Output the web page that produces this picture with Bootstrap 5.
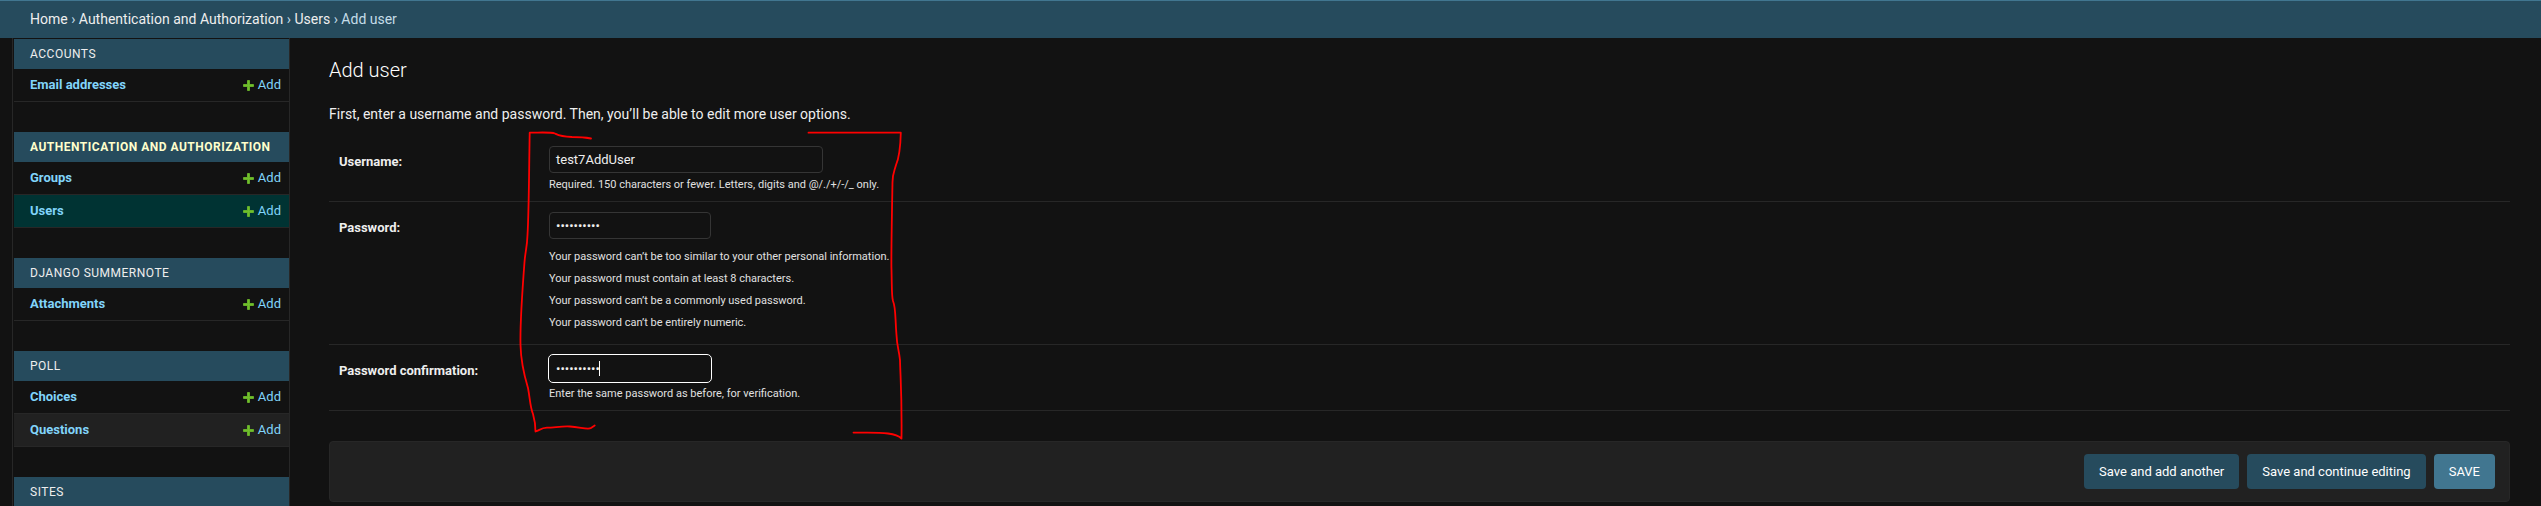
<!DOCTYPE html>
<html lang="en" data-bs-theme="dark">
<head>
<meta charset="utf-8">
<meta name="viewport" content="width=device-width, initial-scale=1">
<title>Add user | Django site admin</title>
<link href="https://cdn.jsdelivr.net/npm/bootstrap@5.3.0/dist/css/bootstrap.min.css" rel="stylesheet">
<style>
html{height:506px;overflow:hidden}
body{background:#121212;color:#eee;font:14px/20px Roboto,"Liberation Sans",sans-serif;height:506px;overflow:hidden}
a{text-decoration:none}
.crumbs{height:38px;background:#264b5d;border-top:1px solid #417690;padding:0 30px 1px;color:#c4dce8;white-space:pre;font-size:14px}
.crumbs a{color:#eee}
.side{width:278px;margin-left:12px;border:solid #272727;border-width:0 1px;padding:1px 0 0 1px;height:468px;overflow:hidden;flex:none}
.app{margin-bottom:30px}
.cap{height:30px;background:#264b5d;color:#eee;padding-left:16px;font-size:12px;letter-spacing:.5px;text-transform:uppercase}
.cap.now{color:#ffc;font-weight:700}
.model{height:33px;border-bottom:1px solid #272727;padding:0 8px 0 16px;font-size:13px}
.model a{color:#81d4fa}
.model.now{background:#033}
.model.hov{background:#212121}
.pane{position:relative;padding:0 31px 0 39px;min-width:0;height:468px}
h1{font-size:20px;font-weight:300;line-height:24px;margin:20px 0 20px}
.intro{margin:0;height:34px;line-height:24px}
.frow{border-bottom:1px solid #272727;padding:10px;height:66px}
.frow.tall{height:143px}
.frow label{width:210px;font-size:13px;font-weight:700;line-height:20px;padding-top:6px;flex:none}
.box{display:block;height:27px;width:162px;border:1px solid #353535;border-radius:4px;background:#121212;color:#eee;padding:5px 6px;font-size:13px;line-height:15px}
.box.wide{width:274px}
.box.on{border-color:#121212;outline:1px solid #fff}
.caret{position:absolute;left:50px;top:6px;width:1px;height:15px;background:#fff}
.hint{font-size:11px;line-height:14px;color:#e0e0e0;margin-top:5px;white-space:nowrap}
.hint p{margin:0 0 8px}
.hint.rules{margin-top:11px}
.acts{margin-top:30px;height:61px;border:1px solid #272727;border-radius:4px;background:#212121;padding:0 14px;gap:8px}
.acts .btn{height:35px;padding:0 15px;font-size:13px;line-height:35px;border:0;border-radius:4px;color:#fff;background:#264b5d}
.acts .btn.main{background:#417690}
.pen{position:absolute;left:210px;top:82px}
</style>
</head>
<body>
<nav class="crumbs d-flex align-items-center"><a href="#">Home</a> › <a href="#">Authentication and Authorization</a> › <a href="#">Users</a> › Add user</nav>
<div class="d-flex">
<aside class="side" id="side"></aside>
<main class="pane flex-grow-1">
<h1>Add user</h1>
<p class="intro">First, enter a username and password. Then, you’ll be able to edit more user options.</p>
<div class="frow d-flex"><label>Username:</label><div><div class="box wide">test7AddUser</div><div class="hint">Required. 150 characters or fewer. Letters, digits and @/./+/-/_ only.</div></div></div>
<div class="frow tall d-flex"><label>Password:</label><div><div class="box">••••••••••</div><div class="hint rules"><p>Your password can’t be too similar to your other personal information.</p><p>Your password must contain at least 8 characters.</p><p>Your password can’t be a commonly used password.</p><p>Your password can’t be entirely numeric.</p></div></div></div>
<div class="frow d-flex"><label>Password confirmation:</label><div><div class="position-relative"><div class="box on">••••••••••</div><span class="caret"></span></div><div class="hint">Enter the same password as before, for verification.</div></div></div>
<div class="acts d-flex justify-content-end align-items-center"><button class="btn">Save and add another</button><button class="btn">Save and continue editing</button><button class="btn main">SAVE</button></div>
<svg class="pen" width="420" height="330" viewBox="500 120 420 330" fill="none" stroke="#f00" stroke-width="1.8" stroke-linecap="round" stroke-linejoin="round">
<path d="M591 138.5Q583 137 572 137C560 136.500 558 135 555 133.500C551 132 545 132.500 529.700 132.700C529 170 529 210 527.500 235C527 248 525.500 250 524.500 262C522 295 520 325 520.500 345C521 365 525 378 528 388C530 398 530 407 533 414C535 421 535.500 425 535.500 431.500C540 430 541 428 547 427.700C555 427.500 562 426 570 426.500C580 427 588 430 591 428L594.700 425.500"/>
<path d="M808.500 132.700H900.800C900.500 145 899 158 896 165C894 172 892.500 174 892.500 182C892 210 891 260 891.500 270C892 288 891.500 296 893 301C896 308 895 318 896.500 335C897 347 899 350 900 360C900.500 380 902 395 901.500 438.500C899 436 896 434.500 888 433.500C877 432 866 432.700 853.500 432.600"/>
</svg>
</main>
</div>
<script src="https://cdn.jsdelivr.net/npm/bootstrap@5.3.0/dist/js/bootstrap.bundle.min.js"></script>
<script>
const plus='<svg width="11" height="11" viewBox="0 0 11 11" class="me-1"><path d="M4.500 .5h2v4h4v2h-4v4h-2v-4h-4v-2h4z" fill="#70bf2b" stroke="#70bf2b" stroke-width=".8"/></svg>';
const apps=[["Accounts","",[["Email addresses",""]]],["Authentication and Authorization","now",[["Groups",""],["Users","now"]]],["Django Summernote","",[["Attachments",""]]],["Poll","",[["Choices",""],["Questions","hov"]]],["Sites","",[]]];
document.getElementById("side").innerHTML=apps.map(([n,c,m])=>`<div class="app"><div class="cap ${c} d-flex align-items-center">${n}</div>${m.map(([t,k])=>`<div class="model ${k} d-flex align-items-center justify-content-between"><a href="#"><b>${t}</b></a><a href="#" class="d-flex align-items-center">${plus}Add</a></div>`).join("")}</div>`).join("");
</script>
</body>
</html>
